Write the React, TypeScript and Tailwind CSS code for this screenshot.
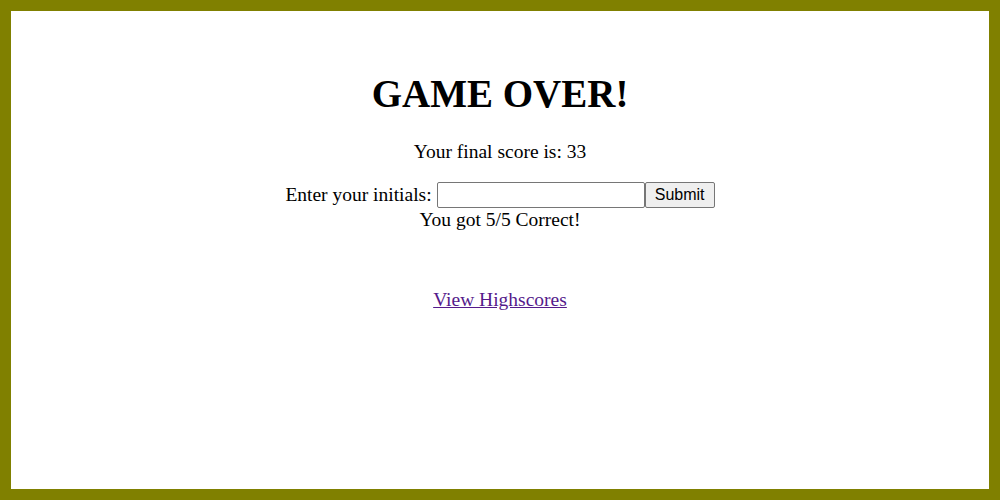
export default function App() {
  return (
    <div className="h-[500px] w-[1000px] border-[11px] border-[#808000] bg-white font-['Liberation_Serif',serif] text-[19.5px] text-black">
      <div className="flex flex-col items-center pt-[59px]">
        <h1 className="text-[39px] font-bold leading-[48px]">GAME OVER!</h1>
        <p className="mt-[23px] leading-[22px]">Your final score is: 33</p>
        <form className="mt-[19px] flex items-center" onSubmit={(e) => e.preventDefault()}>
          <label className="mr-[5px] leading-[22px]">Enter your initials:</label>
          <input
            type="text"
            className="h-[26px] w-[208px] rounded-[2px] border border-[#767676] bg-white px-1"
          />
          <button className="h-[26px] w-[70px] rounded-[2px] border border-[#767676] bg-[#efefef] font-['Liberation_Sans',sans-serif] text-[16px]">
            Submit
          </button>
        </form>
        <p className="mt-[1px] leading-[22px]">You got 5/5 Correct!</p>
        <a href="#" className="mt-[58px] leading-[22px] text-[#551a8b] underline">
          View Highscores
        </a>
      </div>
    </div>
  );
}
